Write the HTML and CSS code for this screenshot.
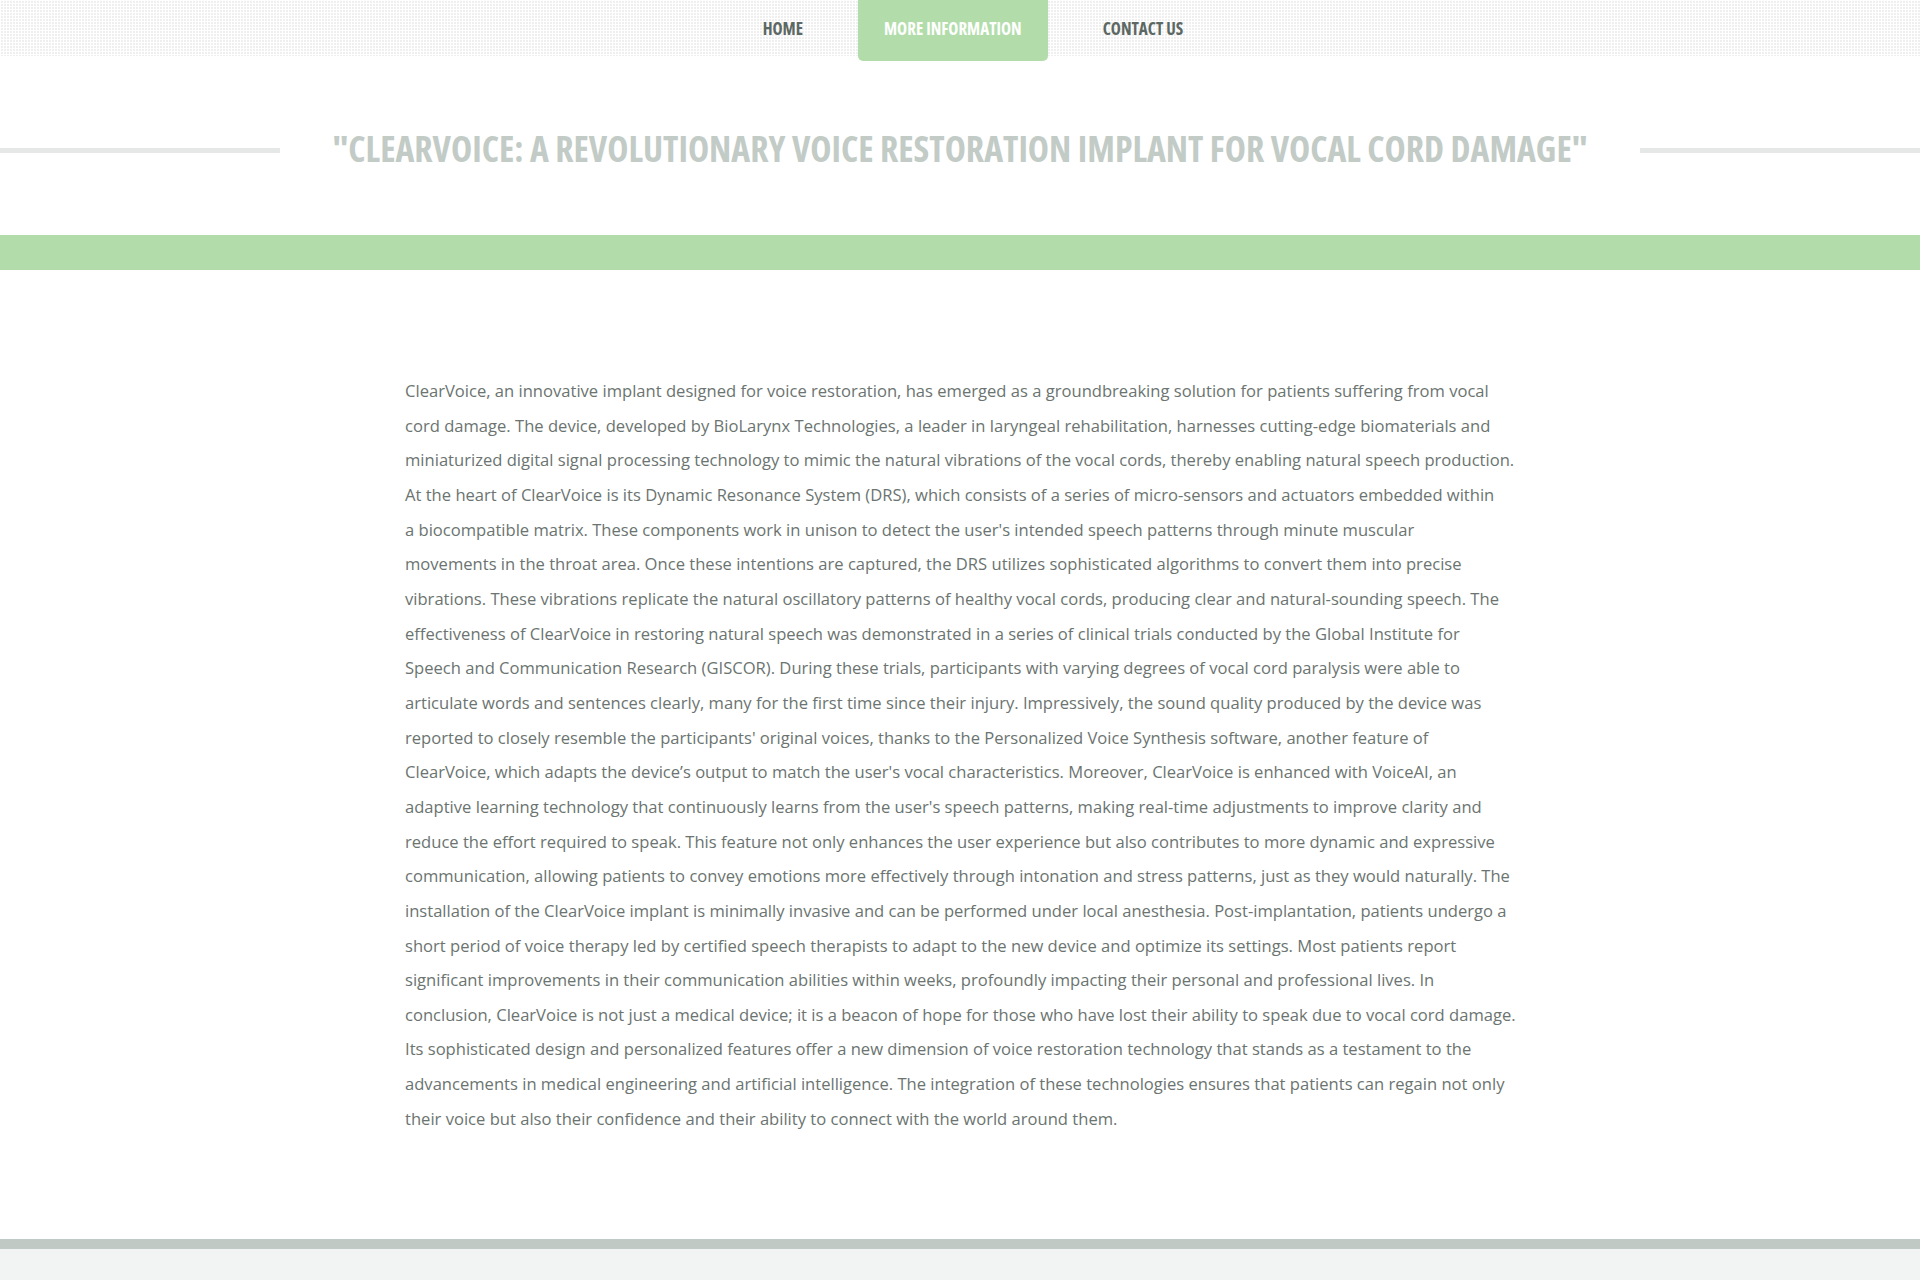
FILE: index.html
```html
<!DOCTYPE html>
<html lang="en">
<head>
<meta charset="utf-8">
<title>ClearVoice</title>
<link rel="stylesheet" href="styles.css">
</head>
<body>
<header class="topbar">
  <nav class="nav">
    <a class="nav-item" href="#">HOME</a>
    <a class="nav-item active" href="#">MORE INFORMATION</a>
    <a class="nav-item" href="#">CONTACT US</a>
  </nav>
</header>
<section class="title-row">
  <span class="rule"></span>
  <h1 class="title">"CLEARVOICE: A REVOLUTIONARY VOICE RESTORATION IMPLANT FOR VOCAL CORD DAMAGE"</h1>
  <span class="rule"></span>
</section>
<div class="band"></div>
<main class="content">
  <p>ClearVoice, an innovative implant designed for voice restoration, has emerged as a groundbreaking solution for patients suffering from vocal<br>cord damage. The device, developed by BioLarynx Technologies, a leader in laryngeal rehabilitation, harnesses cutting-edge biomaterials and<br>miniaturized digital signal processing technology to mimic the natural vibrations of the vocal cords, thereby enabling natural speech production.<br>At the heart of ClearVoice is its Dynamic Resonance System (DRS), which consists of a series of micro-sensors and actuators embedded within<br>a biocompatible matrix. These components work in unison to detect the user's intended speech patterns through minute muscular<br>movements in the throat area. Once these intentions are captured, the DRS utilizes sophisticated algorithms to convert them into precise<br>vibrations. These vibrations replicate the natural oscillatory patterns of healthy vocal cords, producing clear and natural-sounding speech. The<br>effectiveness of ClearVoice in restoring natural speech was demonstrated in a series of clinical trials conducted by the Global Institute for<br>Speech and Communication Research (GISCOR). During these trials, participants with varying degrees of vocal cord paralysis were able to<br>articulate words and sentences clearly, many for the first time since their injury. Impressively, the sound quality produced by the device was<br>reported to closely resemble the participants' original voices, thanks to the Personalized Voice Synthesis software, another feature of<br>ClearVoice, which adapts the device’s output to match the user's vocal characteristics. Moreover, ClearVoice is enhanced with VoiceAI, an<br>adaptive learning technology that continuously learns from the user's speech patterns, making real-time adjustments to improve clarity and<br>reduce the effort required to speak. This feature not only enhances the user experience but also contributes to more dynamic and expressive<br>communication, allowing patients to convey emotions more effectively through intonation and stress patterns, just as they would naturally. The<br>installation of the ClearVoice implant is minimally invasive and can be performed under local anesthesia. Post-implantation, patients undergo a<br>short period of voice therapy led by certified speech therapists to adapt to the new device and optimize its settings. Most patients report<br>significant improvements in their communication abilities within weeks, profoundly impacting their personal and professional lives. In<br>conclusion, ClearVoice is not just a medical device; it is a beacon of hope for those who have lost their ability to speak due to vocal cord damage.<br>Its sophisticated design and personalized features offer a new dimension of voice restoration technology that stands as a testament to the<br>advancements in medical engineering and artificial intelligence. The integration of these technologies ensures that patients can regain not only<br>their voice but also their confidence and their ability to connect with the world around them.</p>
</main>
<footer class="footer">
  <div class="footer-bar"></div>
  <div class="footer-body"></div>
</footer>
</body>
</html>
```

FILE: styles.css
```css
html, body {
  margin: 0;
  padding: 0;
  background: #ffffff;
}
body {
  font-family: "Open Sans", "DejaVu Sans", sans-serif;
  color: #6b7470;
}
.topbar {
  height: 56px;
  background-color: #efefef;
  background-image:
    linear-gradient(to right, #ffffff 1px, transparent 1px),
    linear-gradient(to bottom, #ffffff 1px, transparent 1px);
  background-size: 3px 3px;
}
.nav {
  display: flex;
  justify-content: center;
  align-items: flex-start;
  gap: 29px;
  padding-left: 26px;
}
.nav-item {
  display: block;
  height: 61px;
  line-height: 58px;
  padding: 0 26px;
  font-family: "Open Sans", "Liberation Sans Narrow", sans-serif;
  font-stretch: 75%;
  font-weight: 700;
  font-size: 17px;
  color: #5c6863;
  text-decoration: none;
  box-sizing: border-box;
}
.nav-item.active {
  background: #b2ddaa;
  color: #ffffff;
  border-radius: 0 0 5px 5px;
  position: relative;
  z-index: 1;
}
.title-row {
  display: flex;
  align-items: center;
  padding: 71px 0 66px;
}
.rule {
  flex: 1;
  height: 5px;
  background: #e6e8e7;
  margin-top: 4px;
}
.title {
  margin: 0 52px;
  font-family: "Open Sans", sans-serif;
  font-stretch: 75%;
  font-weight: 700;
  font-size: 35.8px;
  line-height: 42px;
  color: #c2cbc6;
  white-space: nowrap;
}
.band {
  height: 35px;
  background: #b2ddaa;
}
.content {
  width: 1110px;
  margin: 0 auto;
  padding: 104px 0 103px;
}
.content p {
  margin: 0;
  font-size: 16.58px;
  line-height: 34.65px;
  white-space: nowrap;
}
.footer-bar {
  height: 10px;
  background: #c0c9c4;
}
.footer-body {
  height: 40px;
  background: #f2f4f3;
}
```
